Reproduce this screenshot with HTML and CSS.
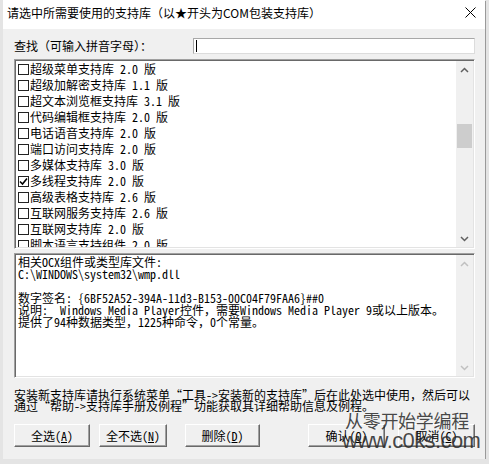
FILE: index.html
```html
<!DOCTYPE html>
<html lang="zh-CN">
<head>
    <meta charset="UTF-8">
    <title>选择支持库</title>
    <link rel="stylesheet" href="styles.css">
</head>
<body>
    <div class="dialog">
        <div class="titlebar">
            <span class="title">请选中所需要使用的支持库（以★开头为COM包装支持库）</span>
            <svg class="close" width="11" height="11" viewBox="0 0 11 11">
                <path d="M0.5 0.5 L10.5 10.5 M10.5 0.5 L0.5 10.5" stroke="#000" stroke-width="1" fill="none"/>
            </svg>
        </div>

        <div class="content">
            <!-- search row -->
            <div class="search-row">
                <label for="search">查找（可输入拼音字母）：</label>
                <div class="search-input"><span class="caret"></span></div>
            </div>

            <!-- library list -->
            <div class="sunken list-box">
                <div class="list-items">
                    <div class="item"><span class="check"></span>超级菜单支持库 2.0 版</div>
                    <div class="item"><span class="check"></span>超级加解密支持库 1.1 版</div>
                    <div class="item"><span class="check"></span>超文本浏览框支持库 3.1 版</div>
                    <div class="item"><span class="check"></span>代码编辑框支持库 2.0 版</div>
                    <div class="item"><span class="check"></span>电话语音支持库 2.0 版</div>
                    <div class="item"><span class="check"></span>端口访问支持库 2.0 版</div>
                    <div class="item"><span class="check"></span>多媒体支持库 3.0 版</div>
                    <div class="item"><span class="check checked">
                        <svg width="9" height="9" viewBox="0 0 9 9"><path d="M1 4.5 L3.5 7 L8 1.5" stroke="#000" stroke-width="1.6" fill="none"/></svg>
                    </span>多线程支持库 2.0 版</div>
                    <div class="item"><span class="check"></span>高级表格支持库 2.6 版</div>
                    <div class="item"><span class="check"></span>互联网服务支持库 2.6 版</div>
                    <div class="item"><span class="check"></span>互联网支持库 2.0 版</div>
                    <div class="item"><span class="check"></span>脚本语言支持组件 2.0 版</div>
                </div>
                <div class="scrollbar">
                    <div class="arrow">
                        <svg width="9" height="6" viewBox="0 0 9 6"><path d="M1 5 L4.5 1.5 L8 5" stroke="#606060" stroke-width="1.5" fill="none"/></svg>
                    </div>
                    <div class="track">
                        <div class="thumb"></div>
                    </div>
                    <div class="arrow">
                        <svg width="9" height="6" viewBox="0 0 9 6"><path d="M1 1 L4.5 4.5 L8 1" stroke="#606060" stroke-width="1.5" fill="none"/></svg>
                    </div>
                </div>
            </div>

            <!-- info box -->
            <div class="sunken info-box">
                <div class="info-text">
                    <p>相关OCX组件或类型库文件:</p>
                    <p>C:\WINDOWS\system32\wmp.dll</p>
                    <p>&nbsp;</p>
                    <p>数字签名: {6BF52A52-394A-11d3-B153-00C04F79FAA6}##0</p>
                    <p>说明:  Windows Media Player控件，需要Windows Media Player 9或以上版本。</p>
                    <p>提供了94种数据类型，1225种命令，0个常量。</p>
                </div>
                <div class="scrollbar disabled">
                    <div class="arrow">
                        <svg width="9" height="6" viewBox="0 0 9 6"><path d="M1 5 L4.5 1.5 L8 5" stroke="#c0c0c0" stroke-width="1.5" fill="none"/></svg>
                    </div>
                    <div class="track"></div>
                    <div class="arrow">
                        <svg width="9" height="6" viewBox="0 0 9 6"><path d="M1 1 L4.5 4.5 L8 1" stroke="#c0c0c0" stroke-width="1.5" fill="none"/></svg>
                    </div>
                </div>
            </div>

            <div class="hint">
                安装新支持库请执行系统菜单“工具->安装新的支持库”后在此处选中使用，然后可以<br>
                通过“帮助->支持库手册及例程”功能获取其详细帮助信息及例程。
            </div>

            <div class="buttons">
                <button class="btn btn-all">全选(<u>A</u>)</button>
                <button class="btn btn-none">全不选(<u>N</u>)</button>
                <button class="btn btn-del">删除(<u>D</u>)</button>
                <button class="btn btn-ok">确认(<u>O</u>)</button>
                <button class="btn btn-cancel">取消(<u>C</u>)</button>
            </div>
        </div>

        <!-- watermark over the buttons -->
        <div class="watermark">
            <div class="wm-cn">从零开始学编程</div>
            <div class="wm-url">www.c0ks.com</div>
        </div>
    </div>
</body>
</html>
```

FILE: styles.css
```css
body {
    margin: 0;
    background-color: #e4e4e4;
    font-family: "Noto Sans Mono CJK SC", "Noto Sans CJK SC", monospace;
    font-size: 12px;
    color: #000;
}
.dialog {
    position: relative;
    width: 482px;
    height: 459px;
    margin-left: 3px;
    background-color: #f0f0f0;
    box-shadow: 1px 1px 0 #9a9a9a;
}
.titlebar {
    height: 29px;
    background-color: #fff;
    display: flex;
    align-items: center;
    justify-content: space-between;
    padding: 0 9px 0 4px;
}
.title {
    font-family: "Noto Sans CJK SC", sans-serif;
    font-size: 12px;
    line-height: 16px;
    margin-top: -3px;
}
.close {
    margin-top: -4px;
}
.content {
    padding: 9px 10px 0 11px;
}
.search-row {
    display: flex;
    align-items: center;
    height: 16px;
}
.search-row label {
    font-family: "Noto Sans CJK SC", sans-serif;
    width: 179px;
    line-height: 16px;
}
.search-input {
    flex: 1;
    height: 14px;
    background-color: #fff;
    border: 1px solid #a8a8a8;
    border-bottom-color: #dcdcdc;
    border-right-color: #dcdcdc;
    display: flex;
    align-items: center;
}
.caret {
    width: 1px;
    height: 12px;
    margin-left: 2px;
    background-color: #000;
}
.sunken {
    background-color: #fff;
    border: 1px solid;
    border-color: #a0a0a0 #fff #fff #a0a0a0;
    box-shadow: inset 1px 1px 0 #696969, inset -1px -1px 0 #e3e3e3;
    padding: 1px;
    display: flex;
}
.list-box {
    margin-top: 5px;
    height: 186px;
}
.list-items {
    flex: 1;
    overflow: hidden;
    padding-left: 1px;
}
.item {
    height: 16px;
    line-height: 16px;
    display: flex;
    align-items: center;
    white-space: nowrap;
}
.check {
    width: 9px;
    height: 9px;
    border: 1px solid #222;
    margin: 0 1px 0 1px;
    background-color: #fff;
    display: flex;
    align-items: center;
    justify-content: center;
}
.scrollbar {
    width: 17px;
    background-color: #f0f0f0;
    display: flex;
    flex-direction: column;
}
.arrow {
    height: 17px;
    display: flex;
    align-items: center;
    justify-content: center;
}
.track {
    flex: 1;
    padding-top: 46px;
}
.thumb {
    height: 24px;
    margin: 0 1px;
    background-color: #cdcdcd;
}
.info-box {
    margin-top: 4px;
    height: 121px;
}
.info-text {
    flex: 1;
    padding: 1px 2px;
}
.info-text p {
    margin: 0;
    line-height: 12px;
    height: 12px;
    white-space: pre;
}
.hint {
    margin-top: 11px;
    line-height: 11px;
    white-space: nowrap;
}
.buttons {
    display: flex;
    margin-top: 13px;
}
.btn {
    height: 23px;
    padding: 0;
    font-family: inherit;
    font-size: 12px;
    color: #000;
    background-color: #f0f0f0;
    border: 1px solid;
    border-color: #fff #696969 #696969 #fff;
    box-shadow: inset -1px -1px 0 #a0a0a0;
    cursor: pointer;
}
.btn-all {
    width: 76px;
}
.btn-none {
    width: 68px;
    margin-left: 9px;
}
.btn-del {
    width: 75px;
    margin-left: 18px;
}
.btn-ok {
    width: 77px;
    margin-left: 48px;
}
.btn-cancel {
    width: 77px;
    margin-left: 13px;
}
.watermark {
    position: absolute;
    left: 339px;
    top: 410px;
    color: rgba(40, 40, 40, 0.85);
    pointer-events: none;
}
.wm-cn {
    font-family: "Noto Sans CJK SC", sans-serif;
    font-size: 18px;
    line-height: 20px;
    letter-spacing: -0.3px;
    padding-left: 3px;
}
.wm-url {
    font-family: "Liberation Sans", sans-serif;
    font-size: 22px;
    line-height: 22px;
    letter-spacing: -0.6px;
}
```
